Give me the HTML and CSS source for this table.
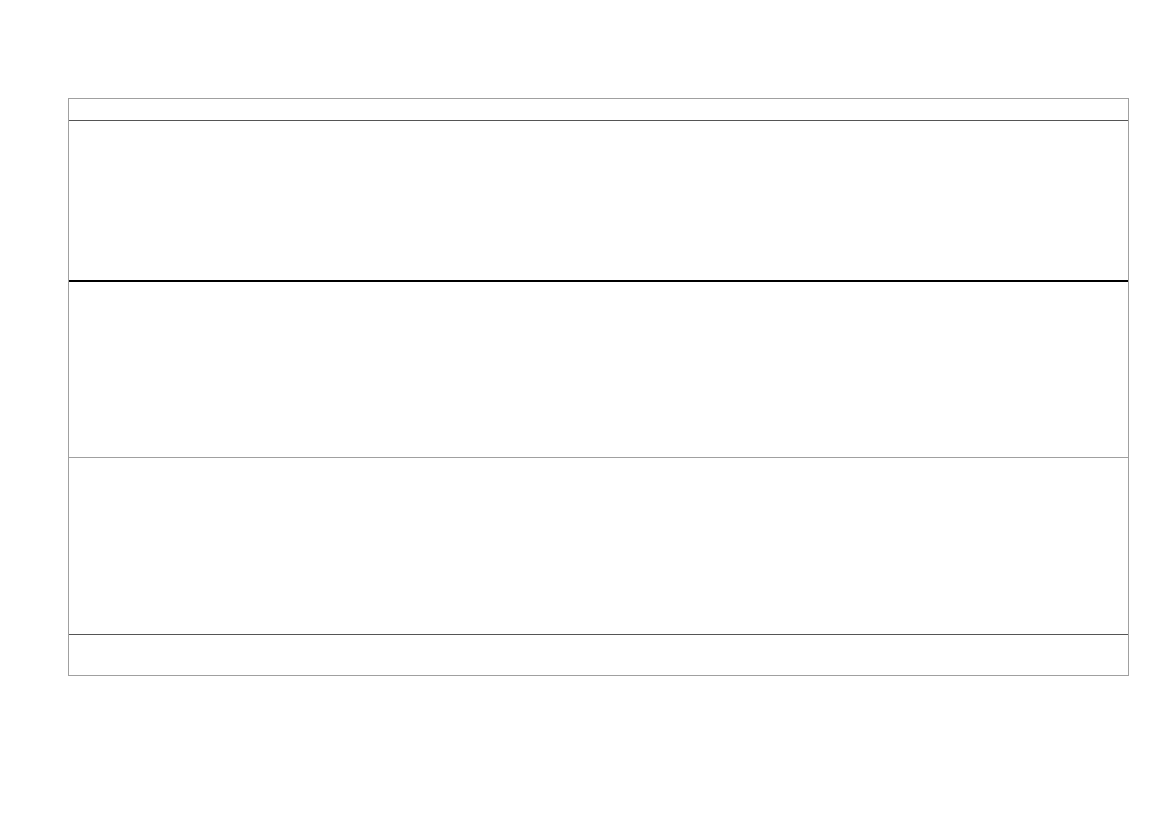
FILE: index.html
```html
<!DOCTYPE html>
<html lang="en">
<head>
<meta charset="utf-8">
<title>Sheet</title>
<link rel="stylesheet" href="styles.css">
</head>
<body>
<div class="page">
  <div class="sheet">
    <div class="row r1"></div>
    <div class="row r2"></div>
    <div class="row r3"></div>
    <div class="row r4"></div>
    <div class="row r5"></div>
  </div>
</div>
</body>
</html>
```
FILE: styles.css
```css
html, body {
  margin: 0;
  padding: 0;
  background: #ffffff;
  font-family: "Liberation Sans", Arial, sans-serif;
}
.page {
  padding: 98px 0 0 68px;
}
.sheet {
  width: 1059px;
  border: 1px solid #a0a0a0;
  display: flex;
  flex-direction: column;
}
.row {
  box-sizing: content-box;
}
.r1 {
  height: 21px;
  border-bottom: 1px solid #555555;
}
.r2 {
  height: 159px;
  border-bottom: 2px solid #000000;
}
.r3 {
  height: 175px;
  border-bottom: 1px solid #a0a0a0;
}
.r4 {
  height: 176px;
  border-bottom: 1px solid #555555;
}
.r5 {
  height: 40px;
}
```
